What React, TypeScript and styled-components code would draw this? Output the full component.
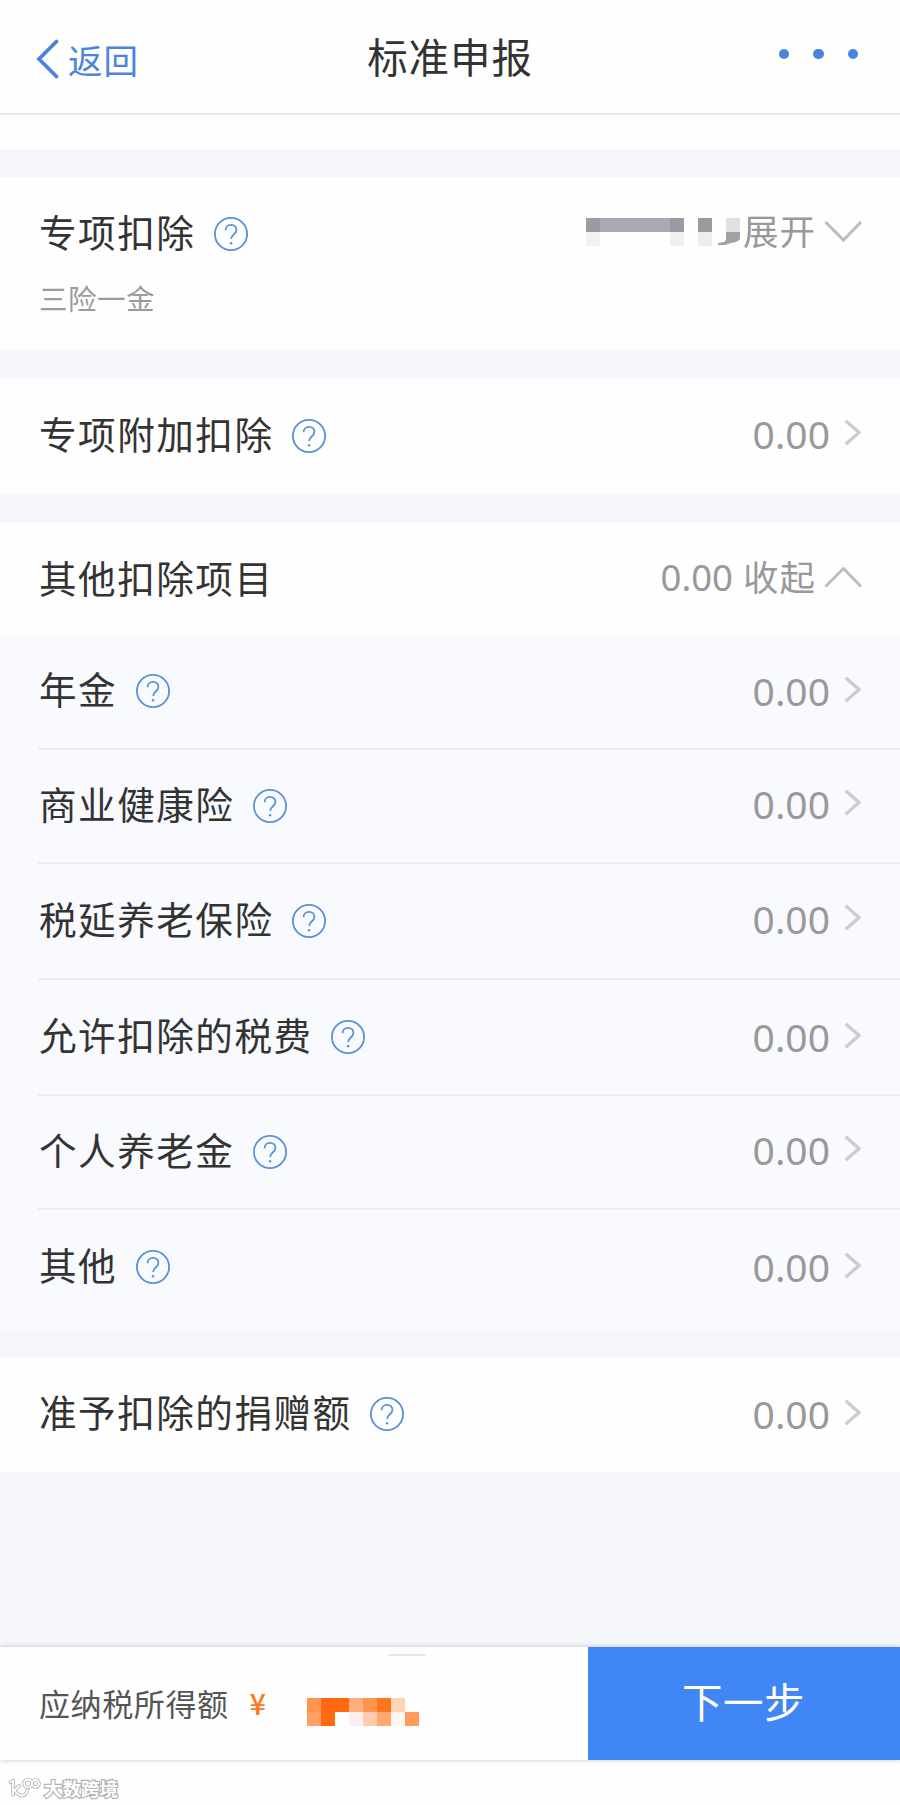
import * as React from 'react'
import styled, { createGlobalStyle } from 'styled-components'

const GlobalStyle = createGlobalStyle`
  * {
    box-sizing: border-box;
  }

  body {
    margin: 0;
    background: #fefefe;
    font-family: "Noto Sans CJK SC", sans-serif;
    color: #333;
  }
`

const Page = styled.div`
  width: 900px;
  height: 1805px;
  display: flex;
  flex-direction: column;
  overflow: hidden;
  background: #f4f6fa;
`

const Header = styled.header`
  height: 115px;
  padding: 0 42px 0 36px;
  display: grid;
  grid-template-columns: 1fr auto 1fr;
  align-items: center;
  background: #fefefe;
  border-bottom: 2px solid #e6e6e6;
`

const BackButton = styled.a`
  display: flex;
  align-items: center;
  gap: 9px;
  color: #4a84dc;
  font-size: 34.5px;
  line-height: 40px;
  letter-spacing: 1px;
  padding-top: 4px;
`

const Title = styled.h1`
  margin: 0 0 0 6px;
  padding-bottom: 2px;
  font-size: 40.5px;
  line-height: 46px;
  font-weight: 400;
  letter-spacing: 0.9px;
`

const MoreDots = styled.div`
  display: flex;
  justify-content: flex-end;
  gap: 24px;
  padding-bottom: 5px;

  i {
    width: 10.4px;
    height: 10.4px;
    border-radius: 50%;
    background: #4a84dc;
  }
`

const Strip = styled.div`
  height: 34px;
  background: #fefefe;
`

const Section = styled.section<{ $gap: number }>`
  margin-top: ${p => p.$gap}px;
  background: #fefefe;
`

const SubList = styled.div`
  background: #f8fafe;
`

const Row = styled.div<{ $height: number }>`
  height: ${p => p.$height}px;
  padding: 0 38px 0 39px;
  display: flex;
  justify-content: space-between;
  align-items: flex-start;
`

const SubRow = styled.div<{ $height: number, $last?: boolean }>`
  height: ${p => p.$height}px;
  margin-left: 38px;
  padding: 0 38px 0 1px;
  display: flex;
  justify-content: space-between;
  align-items: flex-start;
  border-bottom: ${p => p.$last ? 'none' : '2px solid #ebedf1'};
`

const Label = styled.div<{ $top: number }>`
  display: flex;
  align-items: center;
  gap: 18.4px;
  padding-top: ${p => p.$top}px;
  font-size: 37.6px;
  line-height: 44px;
  letter-spacing: 1.5px;

  svg {
    margin-top: 6px;
  }
`

const Value = styled.div<{ $top: number }>`
  display: flex;
  align-items: center;
  gap: 14px;
  padding: ${p => p.$top}px 1px 0 0;
  font-family: "Noto Sans", "Noto Sans CJK SC", sans-serif;
  font-size: 39px;
  line-height: 44px;
  color: #999;

  svg {
    margin-bottom: 4px;
  }
`

const Toggle = styled.div<{ $top: number }>`
  display: flex;
  align-items: center;
  padding-top: ${p => p.$top}px;
  font-size: 35.5px;
  line-height: 44px;
  color: #999;
  letter-spacing: 1px;

  svg {
    flex: none;
    margin-top: 3px;
  }
`

const ToggleAmount = styled.span`
  margin: 2px 10px 0 0;
  font-family: "Noto Sans", sans-serif;
  font-size: 36.5px;
  letter-spacing: 0;
`

const ToggleText = styled.span`
  margin-right: 8px;
`

const SubTitle = styled.div`
  padding: 19px 38px 0 39px;
  font-size: 28.5px;
  line-height: 37px;
  letter-spacing: 0.5px;
  color: #9b9b9b;
`

const Footer = styled.footer`
  height: 113px;
  margin-top: 175px;
  display: flex;
  background: #fefefe;
  box-shadow: 0 0 5px rgba(0, 0, 0, 0.22);
  position: relative;
`

const Summary = styled.div`
  width: 588px;
  padding: 0 0 3px 39px;
  display: flex;
  align-items: center;
  font-size: 31px;
  letter-spacing: 0.6px;
  color: #555;

  svg {
    margin-top: 19px;
  }
`

const Currency = styled.span`
  margin: 0 41px 1px 21px;
  font-size: 29px;
  font-weight: 500;
  letter-spacing: 0;
  color: #fa7a1c;
`

const Handle = styled.i`
  position: absolute;
  left: 388px;
  top: 7px;
  width: 38px;
  height: 2px;
  border-radius: 1px;
  background: #e6e6e6;
`

const NextButton = styled.button`
  flex: 1;
  border: 0;
  padding: 0 1px 7px 0;
  background: #4086f5;
  color: #fff;
  font-family: inherit;
  font-size: 40.5px;
  letter-spacing: 0.5px;
`

const Bottom = styled.div`
  flex: 1;
  display: flex;
  align-items: center;
  gap: 3px;
  padding: 11px 0 0 8px;
  background: #fefefe;
`

const Mark = styled.span`
  font-size: 18.5px;
  line-height: 24px;
  font-weight: 700;
  color: #fff;
  -webkit-text-stroke: 2.4px #b4b4b4;
  paint-order: stroke fill;
`

const HelpIcon = () => (
  <svg width="34" height="34" viewBox="0 0 34 34" fill="none" stroke="#5a8fdc">
    <circle cx="17" cy="17" r="16.1" strokeWidth="1.8" />
    <path d="M11.6 13.2c0-3.3 2.3-5.3 5.4-5.3 3.2 0 5.4 2 5.4 4.9 0 2.3-1.2 3.5-2.7 4.7-1.7 1.4-2.5 2.3-2.5 4.6" strokeWidth="1.8" />
    <circle cx="17.1" cy="26.3" r="1.2" fill="#5a8fdc" stroke="none" />
  </svg>
)

const ArrowRight = () => (
  <svg width="17" height="27" viewBox="0 0 17 27" fill="none" stroke="#cdcdcf" strokeWidth="3.4">
    <path d="M1.6 1.8L15 13.5L1.6 25.2" />
  </svg>
)

const ArrowToggle = ({ up }: { up?: boolean }) => (
  <svg width="38" height="22" viewBox="0 0 38 22" fill="none" stroke="#bdbdbd" strokeWidth="3">
    <path d={up ? 'M1.5 19.5L19.5 1.5L37 19.5' : 'M1.5 1L19.5 19L37 1'} />
  </svg>
)

interface MosaicProps {
  width: number
  cells: [number, number, number, string][]
  children?: React.ReactNode
}

// every entry is column, row, span, color
const Mosaic = ({ width, cells, children }: MosaicProps) => (
  <svg width={width} height="28" viewBox={`0 0 ${width} 28`} shapeRendering="crispEdges">
    {cells.map(([col, row, span, color]) => (
      <rect key={`${col}-${row}`} x={col * 14} y={row * 14} width={span * 14} height="14" fill={color} />
    ))}
    {children}
  </svg>
)

const grayCells: MosaicProps['cells'] = [
  [0, 0, 1, '#999ca4'],
  [1, 0, 5, '#a9aab5'],
  [6, 0, 1, '#989ba2'],
  [8, 0, 1, '#969c9f'],
  [10, 0, 1, '#e1e1e3'],
  [0, 1, 1, '#f1f2f2'],
  [6, 1, 1, '#eff0f0'],
  [8, 1, 1, '#ebeeed'],
]

const orangeCells: MosaicProps['cells'] = [
  [0, 0, 1, '#ff9350'],
  [1, 0, 2, '#ff6a10'],
  [3, 0, 1, '#ffae7a'],
  [4, 0, 1, '#ff944e'],
  [5, 0, 1, '#ff761c'],
  [6, 0, 1, '#ffd5b6'],
  [0, 1, 1, '#ffa062'],
  [1, 1, 1, '#ff6a10'],
  [3, 1, 1, '#fdefee'],
  [4, 1, 1, '#ffcaae'],
  [5, 1, 1, '#ffa96e'],
  [6, 1, 1, '#fef6f3'],
  [7, 1, 1, '#ff9c5c'],
]

const items = [
  { name: '年金', height: 115, labelTop: 31, valueTop: 34 },
  { name: '商业健康险', height: 114, labelTop: 31, valueTop: 32 },
  { name: '税延养老保险', height: 116, labelTop: 32, valueTop: 33 },
  { name: '允许扣除的税费', height: 116, labelTop: 32, valueTop: 35 },
  { name: '个人养老金', height: 114, labelTop: 31, valueTop: 32 },
  { name: '其他', height: 122, labelTop: 32, valueTop: 35, last: true },
]

export default () => {
  return (
    <Page>
      <GlobalStyle />
      <Header>
        <BackButton>
          <svg width="23" height="40" viewBox="0 0 23 40" fill="none" stroke="#4a84dc" strokeWidth="3.8" strokeLinecap="round">
            <path d="M20.5 2.5L3 20L20.5 37.5" />
          </svg>
          <span>返回</span>
        </BackButton>
        <Title>标准申报</Title>
        <MoreDots><i /><i /><i /></MoreDots>
      </Header>
      <Strip />

      <Section $gap={28}>
        <Row $height={83}>
          <Label $top={32}>专项扣除<HelpIcon /></Label>
          <Toggle $top={31}>
            <Mosaic width={157} cells={grayCells}>
              <path d="M154 14V21Q152 24 145 25L139 27H132V25L138 24Q140 23 140 21V14Z" fill="#a0a1a3" shapeRendering="auto" />
            </Mosaic>
            <ToggleText>展开</ToggleText>
            <ArrowToggle />
          </Toggle>
        </Row>
        <SubTitle>三险一金</SubTitle>
        <Row $height={34} />
      </Section>

      <Section $gap={28}>
        <Row $height={116}>
          <Label $top={33}>专项附加扣除<HelpIcon /></Label>
          <Value $top={34}>0.00<ArrowRight /></Value>
        </Row>
      </Section>

      <Section $gap={29}>
        <Row $height={112}>
          <Label $top={32}>其他扣除项目</Label>
          <Toggle $top={30}>
            <ToggleAmount>0.00</ToggleAmount>
            <ToggleText>收起</ToggleText>
            <ArrowToggle up />
          </Toggle>
        </Row>
        <SubList>
          {items.map(item => (
            <SubRow key={item.name} $height={item.height} $last={item.last}>
              <Label $top={item.labelTop}>{item.name}<HelpIcon /></Label>
              <Value $top={item.valueTop}>0.00<ArrowRight /></Value>
            </SubRow>
          ))}
        </SubList>
      </Section>

      <Section $gap={25}>
        <Row $height={115}>
          <Label $top={32}>准予扣除的捐赠额<HelpIcon /></Label>
          <Value $top={35}>0.00<ArrowRight /></Value>
        </Row>
      </Section>

      <Footer>
        <Handle />
        <Summary>
          应纳税所得额
          <Currency>¥</Currency>
          <Mosaic width={112} cells={orangeCells} />
        </Summary>
        <NextButton>下一步</NextButton>
      </Footer>
      <Bottom>
        <svg width="33" height="22" viewBox="0 0 33 22" fill="none" strokeLinecap="round" strokeLinejoin="round">
          {['#b4b4b4', '#fff'].map((color, i) => (
            <path
              key={color}
              d="M2.5 5L5 3.5V18M11 9L6.5 13.5Q10 18.5 14 18.5Q18 18.5 19.5 13M24 6.5A4 4 0 1 0 16 6.5A4 4 0 1 0 24 6.5A3.5 3.5 0 1 1 31 6.5A3.5 3.5 0 1 1 24 6.5"
              stroke={color}
              strokeWidth={i ? 1.8 : 3.6}
            />
          ))}
        </svg>
        <Mark>大数跨境</Mark>
      </Bottom>
    </Page>
  )
}
